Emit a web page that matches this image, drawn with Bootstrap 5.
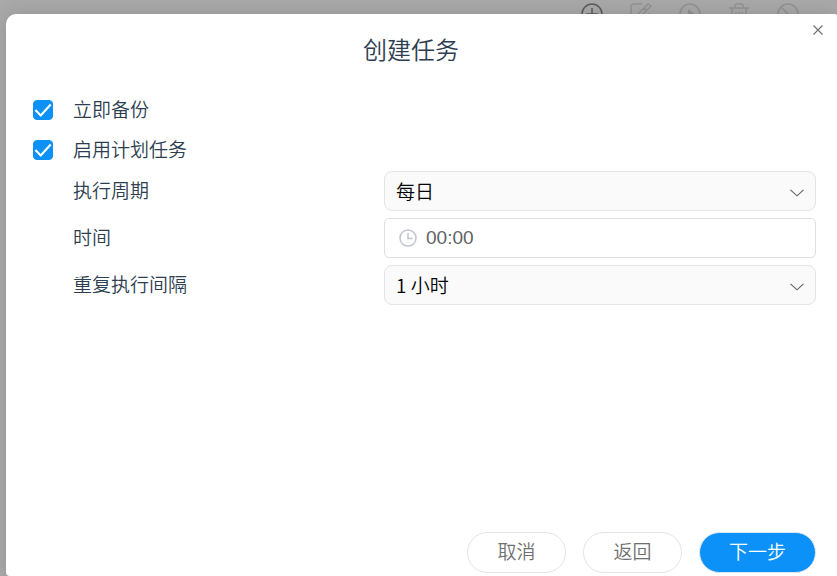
<!DOCTYPE html>
<html lang="zh-CN">
<head>
<meta charset="utf-8">
<meta name="viewport" content="width=device-width, initial-scale=1">
<title>创建任务</title>
<link href="https://cdn.jsdelivr.net/npm/bootstrap@5.3.0/dist/css/bootstrap.min.css" rel="stylesheet">
<style>
  body {
    font-family: "Noto Sans CJK SC", sans-serif;
    font-weight: 350;
    font-size: 19px;
    line-height: 28px;
    color: #2c3e50;
    background: #a9a9a9;
  }
  .page-tools { gap: 27px; padding: 2px 38px 0 0; color: #939291; }
  .page-tools button { width: 22px; height: 24px; color: inherit; }
  .page-tools .tool-add { color: #5c5c5c; }
  .page-tools svg { display: block; fill: none; stroke: currentColor; stroke-width: 1.5; }
  .task-dialog {
    inset: 14px 0 0 6px;
    border-radius: 10px 2px 0 4px;
    box-shadow: 0 0 18px rgba(0, 0, 0, .14);
  }
  .task-head { padding: 17px 21px 23px 0; }
  .task-head h1 { font-size: 24px; line-height: 36px; font-weight: 350; }
  .task-close { top: 10px; right: 13px; width: 12px; height: 12px; }
  .task-close svg { display: block; }
  .task-form { padding: 0 21px 0 27px; }
  .task-form label { padding-bottom: 3px; }
  .check-line { height: 40px; gap: 20px; }
  .check-line .form-check-input {
    width: 20px; height: 20px; border-radius: 4px; border-color: #0b91f8;
  }
  .check-line .form-check-input:checked {
    background-color: #0b91f8;
    background-image: url("data:image/svg+xml,%3Csvg xmlns='http://www.w3.org/2000/svg' viewBox='0 0 20 20'%3E%3Cpath d='M1.500 10l6 6L18.500 4' fill='none' stroke='white' stroke-width='2.400'/%3E%3C/svg%3E");
  }
  .field-list { padding-top: 1px; gap: 7px; }
  .field-line { display: grid; grid-template-columns: 311fr 432fr; align-items: center; padding-left: 40px; }
  .field-line .form-select {
    height: 40px;
    padding: 0 40px 0 11px;
    font-size: 19px;
    font-weight: 350;
    line-height: 28px;
    color: #000;
    border-color: #e4e4e7;
    border-radius: 8px;
    background-color: #fafafa;
    background-image: url("data:image/svg+xml,%3Csvg xmlns='http://www.w3.org/2000/svg' viewBox='0 0 14 8'%3E%3Cpath d='M.5 .8L7 6.8 13.500 .8' fill='none' stroke='%23606060' stroke-width='1.100'/%3E%3C/svg%3E");
    background-size: 14px 8px;
    background-position: right 11px top 17px;
  }
  .time-box { height: 40px; padding: 0 14px; gap: 9px; border: 1px solid #dcdfe6; border-radius: 5px; }
  .time-box input {
    min-width: 0; padding: 0; outline: 0; color: #606266;
    font-family: "Liberation Sans", sans-serif; font-weight: 400; line-height: 28px;
  }
  .task-foot { gap: 17px; padding: 0 21px 3px; }
  .task-foot .btn {
    min-width: 99px; height: 41px; padding: 0 29px 4px;
    font-size: 19px; font-weight: 350; line-height: 28px;
    color: #707070; border-color: #e4e4e4;
  }
  .task-foot .btn-next { color: #fff; background: #0b91f8; border-color: #dfe8f0; }
</style>
</head>
<body class="vh-100 overflow-hidden position-relative">
<div class="page-tools d-flex justify-content-end">
  <button type="button" class="btn border-0 p-0 tool-add" aria-label="新建"><svg width="22" height="24" viewBox="0 0 22 24"><circle cx="11" cy="12" r="10"/><path d="M11 6v12M5 12h12"/></svg></button>
  <button type="button" class="btn border-0 p-0" aria-label="编辑"><svg width="22" height="24" viewBox="0 0 22 24"><path d="M12 2H4q-3 0-3 3v14q0 3 3 3h12q3 0 3-3v-8M8 12L18 2l3 2-11 11-3 1zM14 6l3 3"/></svg></button>
  <button type="button" class="btn border-0 p-0" aria-label="运行"><svg width="22" height="24" viewBox="0 0 22 24"><circle cx="11" cy="12" r="10"/><path fill="currentColor" stroke="none" d="M9 7l7 5-7 5z"/></svg></button>
  <button type="button" class="btn border-0 p-0" aria-label="删除"><svg width="22" height="24" viewBox="0 0 22 24"><path d="M1 6h20M7 6V4q0-2 2-2h4q2 0 2 2v2M4 6v16h14V6M8 10v8M11 10v8M14 10v8"/></svg></button>
  <button type="button" class="btn border-0 p-0" aria-label="禁用"><svg width="22" height="24" viewBox="0 0 22 24"><circle cx="11" cy="12" r="10"/><path d="M4 5l14 14"/></svg></button>
</div>

<section class="task-dialog position-absolute bg-white d-flex flex-column" role="dialog" aria-labelledby="task-title">
  <header class="task-head text-center">
    <h1 id="task-title" class="m-0">创建任务</h1>
    <button type="button" class="task-close btn border-0 p-0 position-absolute" aria-label="关闭"><svg width="12" height="12" viewBox="0 0 12 12"><path d="M1.500 1.500l9 9M10.500 1.500l-9 9" fill="none" stroke="#707070" stroke-width="1.100"/></svg></button>
  </header>

  <form class="task-form flex-grow-1">
    <div class="check-line d-flex align-items-center">
      <input class="form-check-input m-0" type="checkbox" id="run-now" checked>
      <label for="run-now">立即备份</label>
    </div>
    <div class="check-line d-flex align-items-center">
      <input class="form-check-input m-0" type="checkbox" id="use-plan" checked>
      <label for="use-plan">启用计划任务</label>
    </div>
    <div class="field-list d-flex flex-column">
      <div class="field-line">
        <label for="cycle">执行周期</label>
        <select id="cycle" class="form-select"><option>每日</option></select>
      </div>
      <div class="field-line">
        <label for="start">时间</label>
        <div class="time-box d-flex align-items-center">
          <svg width="18" height="18" viewBox="0 0 18 18" fill="none" stroke="#c0c4cc" stroke-width="1.500" aria-hidden="true"><circle cx="9" cy="9" r="8"/><path d="M9 4v5.500h4.500"/></svg>
          <input id="start" type="text" class="border-0 bg-transparent flex-grow-1" value="00:00">
        </div>
      </div>
      <div class="field-line">
        <label for="repeat">重复执行间隔</label>
        <select id="repeat" class="form-select"><option>1 小时</option></select>
      </div>
    </div>
  </form>

  <footer class="task-foot d-flex justify-content-end">
    <button type="button" class="btn rounded-pill">取消</button>
    <button type="button" class="btn rounded-pill">返回</button>
    <button type="button" class="btn btn-next rounded-pill">下一步</button>
  </footer>
</section>
<script src="https://cdn.jsdelivr.net/npm/bootstrap@5.3.0/dist/js/bootstrap.bundle.min.js"></script>
</body>
</html>
